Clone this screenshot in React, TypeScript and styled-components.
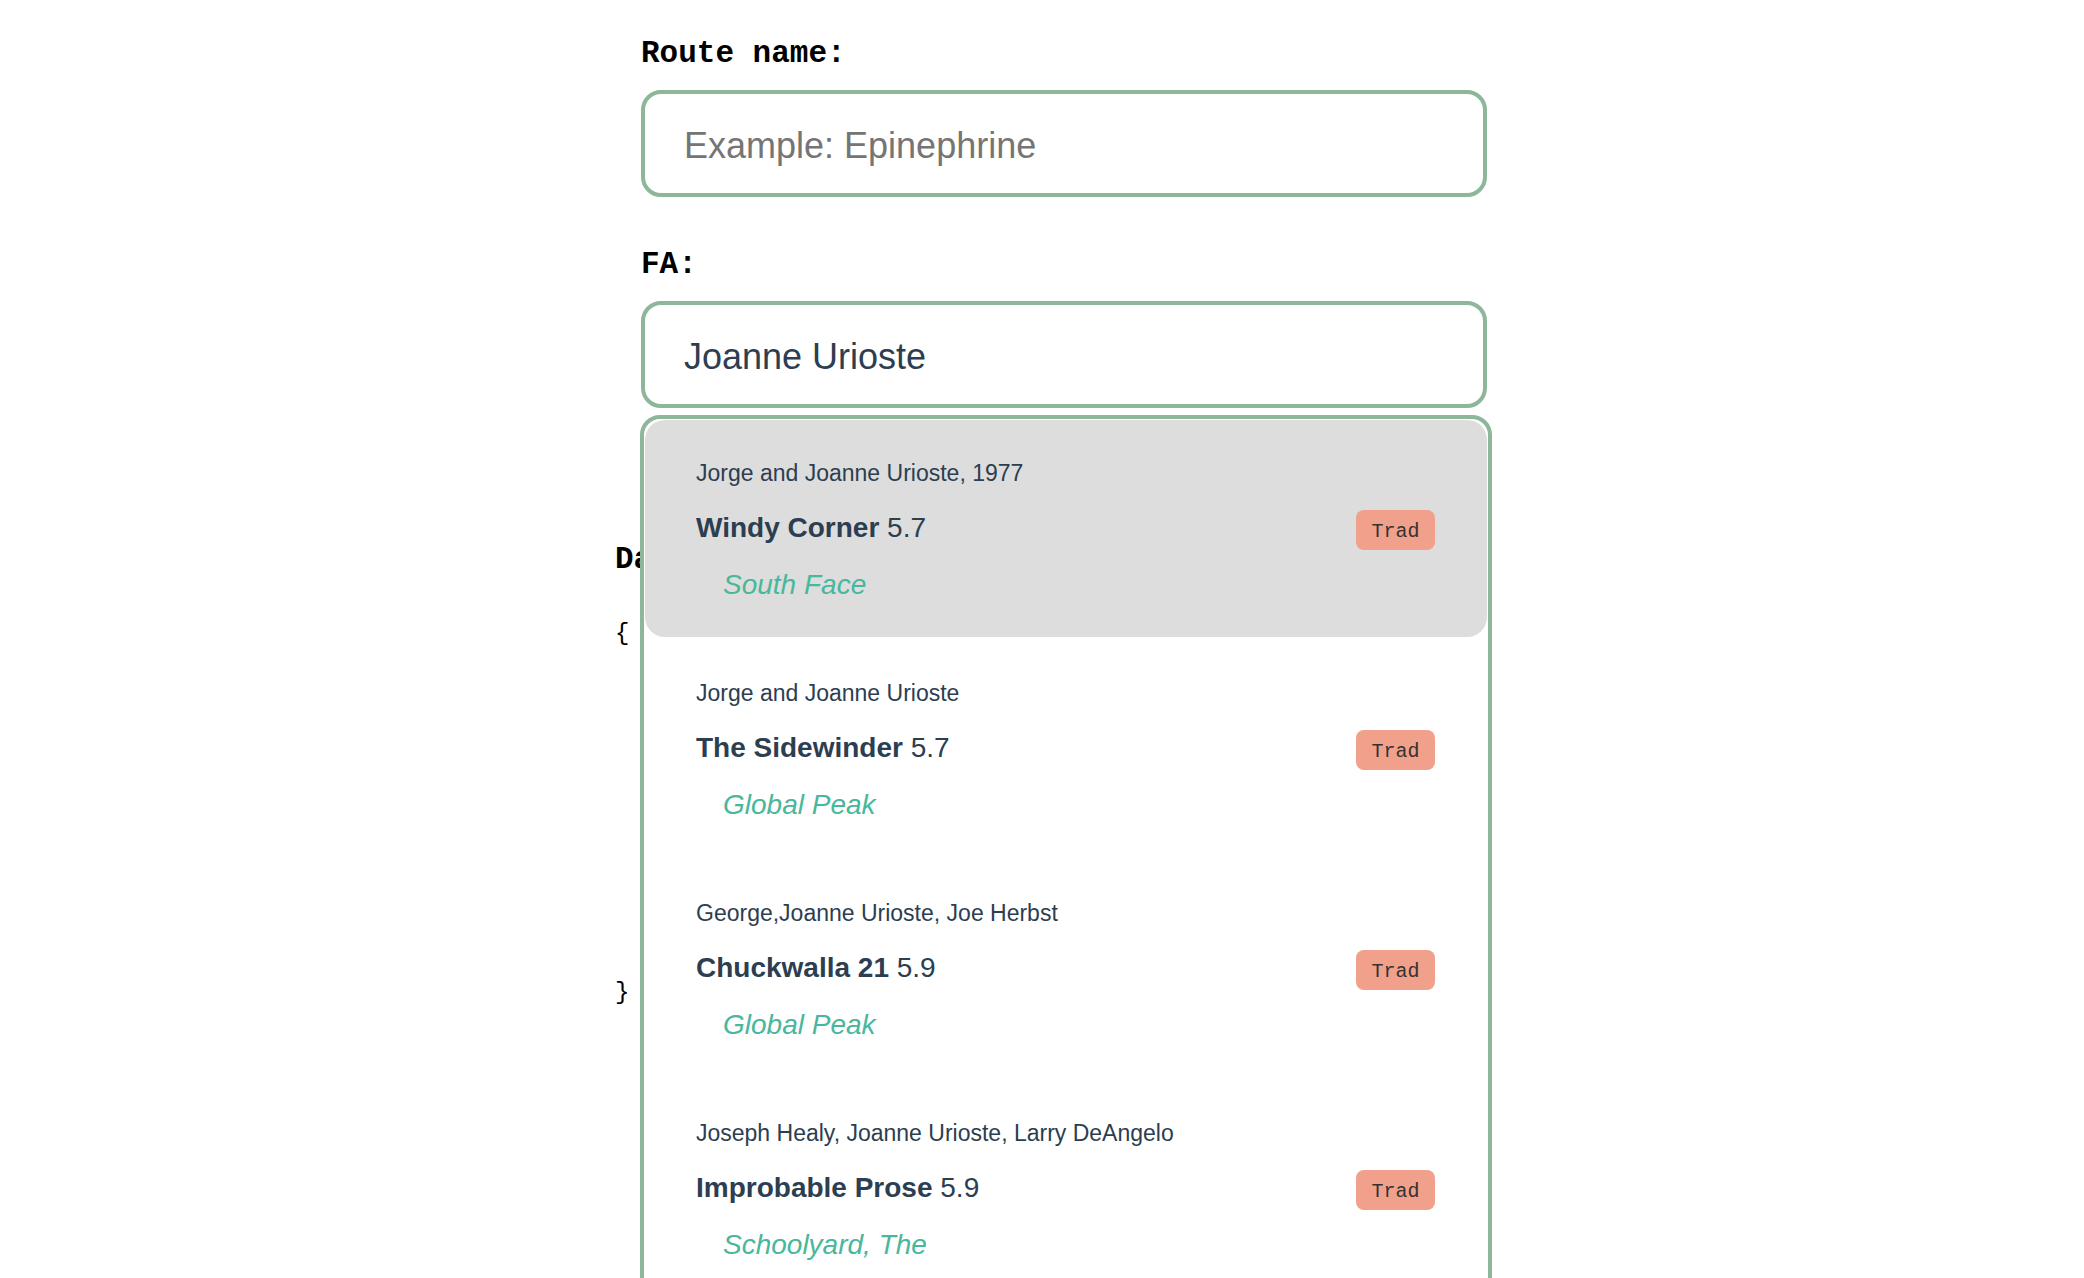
import * as React from "react";
import styled, { createGlobalStyle } from "styled-components";

const GlobalStyle = createGlobalStyle`
  body {
    margin: 0;
    padding: 0;
    background: #ffffff;
    font-family: "Liberation Sans", Arial, sans-serif;
    color: #2c3e50;
  }
`;

const Page = styled.main`
  box-sizing: border-box;
  width: 900px;
  height: 100vh;
  margin: 0 auto;
  padding-top: 36px;
  overflow: hidden;
`;

const Form = styled.form`
  display: flex;
  flex-direction: column;
  gap: 50px;
  width: 846px;
  padding-left: 49px;
`;

const Field = styled.div`
  display: flex;
  flex-direction: column;
`;

const Label = styled.label`
  display: block;
  margin-bottom: 19px;
  font-family: "Liberation Mono", "Courier New", monospace;
  font-weight: bold;
  font-size: 31px;
  line-height: 35px;
  color: #000;
`;

const InputWrap = styled.div`
  position: relative;
`;

const Input = styled.input`
  box-sizing: border-box;
  width: 100%;
  height: 107px;
  padding: 5px 39px 0;
  border: 4px solid #8db69a;
  border-radius: 20px;
  outline: none;
  font-family: "Liberation Sans", Arial, sans-serif;
  font-size: 36px;
  color: #2c3e50;
  background: #fff;

  &::placeholder {
    color: #757575;
  }
`;

const Dropdown = styled.ul`
  position: absolute;
  top: calc(100% + 7px);
  left: -1px;
  z-index: 2;
  box-sizing: border-box;
  width: 852px;
  height: 1000px;
  margin: 0;
  padding: 1px;
  border: 4px solid #8db69a;
  border-radius: 20px;
  background: #fff;
  list-style: none;
`;

const Option = styled.li<{ $active?: boolean }>`
  display: flex;
  flex-direction: column;
  gap: 25px;
  margin-bottom: 3px;
  padding: 40px 52px 36px 51px;
  border-radius: 20px;
  background: ${p => (p.$active ? "#dddddd" : "transparent")};
`;

const Author = styled.div`
  font-size: 23px;
  color: #2c3e50;
`;

const TitleRow = styled.div`
  display: flex;
  align-items: center;
  justify-content: space-between;
  height: 32px;
  font-size: 28px;
  color: #2c3e50;

  strong {
    font-weight: bold;
  }
`;

const Badge = styled.span`
  display: flex;
  align-items: center;
  justify-content: center;
  box-sizing: border-box;
  width: 79px;
  height: 40px;
  margin-top: 3px;
  padding-top: 3px;
  border-radius: 8px;
  background: #f1a08b;
  font-family: "Liberation Mono", "Courier New", monospace;
  font-size: 20px;
  color: #333;
`;

const Area = styled.div`
  padding-left: 27px;
  font-size: 28px;
  font-style: italic;
  color: #48b79b;
`;

const DataSection = styled.section`
  margin-top: 134px;
  padding-left: 23px;
`;

const DataTitle = styled.h3`
  margin: 0;
  font-family: "Liberation Mono", "Courier New", monospace;
  font-weight: bold;
  font-size: 31px;
  line-height: 35px;
  color: #000;
`;

const Pre = styled.pre`
  margin: 43px 0 0;
  font-family: "Liberation Mono", "Courier New", monospace;
  font-size: 24px;
  line-height: 27.6px;
  color: #000;
`;

const routes = [
  { fa: "Jorge and Joanne Urioste, 1977", name: "Windy Corner", grade: "5.7", area: "South Face", type: "Trad" },
  { fa: "Jorge and Joanne Urioste", name: "The Sidewinder", grade: "5.7", area: "Global Peak", type: "Trad" },
  { fa: "George,Joanne Urioste, Joe Herbst", name: "Chuckwalla 21", grade: "5.9", area: "Global Peak", type: "Trad" },
  { fa: "Joseph Healy, Joanne Urioste, Larry DeAngelo", name: "Improbable Prose", grade: "5.9", area: "Schoolyard, The", type: "Trad" },
];

// the body of the json preview sits under the open dropdown
const json = "{" + "\n".repeat(13) + "}";

export default function App() {
  const [fa, setFa] = React.useState("Joanne Urioste");

  return (
    <>
      <GlobalStyle />
      <Page>
        <Form onSubmit={e => e.preventDefault()}>
          <Field>
            <Label htmlFor="route-name">Route name:</Label>
            <Input id="route-name" placeholder="Example: Epinephrine" />
          </Field>
          <Field>
            <Label htmlFor="fa">FA:</Label>
            <InputWrap>
              <Input id="fa" value={fa} onChange={e => setFa(e.target.value)} />
              <Dropdown>
                {routes.map((r, i) => (
                  <Option key={r.name} $active={i === 0}>
                    <Author>{r.fa}</Author>
                    <TitleRow>
                      <span>
                        <strong>{r.name}</strong> {r.grade}
                      </span>
                      <Badge>{r.type}</Badge>
                    </TitleRow>
                    <Area>{r.area}</Area>
                  </Option>
                ))}
              </Dropdown>
            </InputWrap>
          </Field>
        </Form>
        <DataSection>
          <DataTitle>Data:</DataTitle>
          <Pre>{json}</Pre>
        </DataSection>
      </Page>
    </>
  );
}
